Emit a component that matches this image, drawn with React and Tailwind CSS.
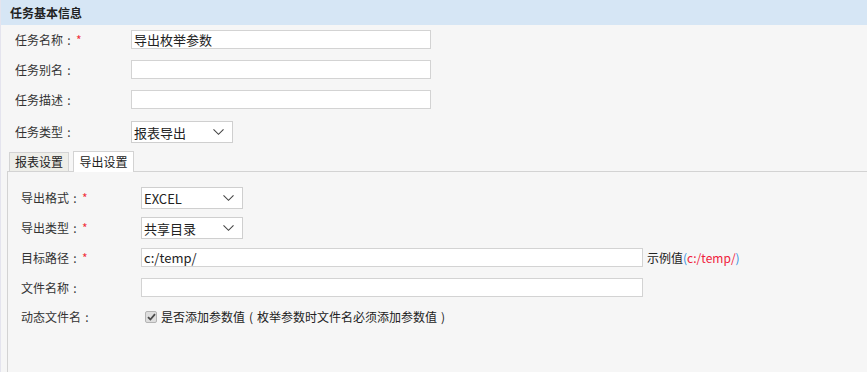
import React from 'react';

const font = { fontFamily: '"Noto Sans CJK SC", "Liberation Sans", sans-serif' };

function Chevron() {
    return (
        <svg width="11" height="7" viewBox="0 0 11 7" className="absolute right-[8px] top-1/2 -translate-y-1/2">
            <polyline points="0.5,0.8 5.5,5.8 10.5,0.8" fill="none" stroke="#444" strokeWidth="1.1" />
        </svg>
    );
}

function Select({ value }) {
    return (
        <div className="relative w-[102px] h-[22px] bg-white border border-[#cfcfcf] flex items-center pl-[2px] text-[13px] text-[#222] leading-none">
            {value}
            <Chevron />
        </div>
    );
}

function Input({ value = '', width }) {
    return (
        <div className={`${width} h-[19px] bg-white border border-[#d3d3d3] flex items-center pl-[2px] text-[13px] text-[#222] leading-none`}>
            {value}
        </div>
    );
}

// full-width glyph with the mark centred in its box, as YaHei draws it
function Mark({ children }) {
    return <span className="inline-block w-[12px] text-center">{children}</span>;
}

function Label({ children, required, width }) {
    return (
        <div className={`${width} shrink-0 text-[12px] text-[#333] leading-none flex items-center`}>
            {children}<Mark>:</Mark>{required && <span className="text-[#f0323c] ml-[1px]">*</span>}
        </div>
    );
}

export default function App() {
    return (
        <div style={font} className="w-[867px] h-[372px] bg-[#f6f6f6] overflow-hidden flex flex-col border-l border-[#e4e4ee]">
            <div className="h-[25px] shrink-0 bg-[#d6e6f5] pl-[9px] flex items-center text-[12px] font-bold text-[#222]">
                任务基本信息
            </div>

            <div className="pl-[14px] pt-[5px] flex flex-col">
                <div className="flex items-center h-[19px]">
                    <Label width="w-[116px]" required>任务名称</Label>
                    <Input width="w-[300px]" value="导出枚举参数" />
                </div>
                <div className="flex items-center h-[19px] mt-[11px]">
                    <Label width="w-[116px]">任务别名</Label>
                    <Input width="w-[300px]" />
                </div>
                <div className="flex items-center h-[19px] mt-[11px]">
                    <Label width="w-[116px]">任务描述</Label>
                    <Input width="w-[300px]" />
                </div>
                <div className="flex items-center h-[22px] mt-[12px]">
                    <Label width="w-[116px]">任务类型</Label>
                    <Select value="报表导出" />
                </div>
            </div>

            <div className="flex items-end h-[21px] mt-[7px] pl-[8px] gap-[4px] relative z-10">
                <div className="w-[60px] h-[19px] bg-[#eeeee9] border border-b-0 border-[#d3d3d3] flex items-center justify-center text-[12px] text-[#222] leading-none">
                    报表设置
                </div>
                <div className="w-[61px] h-[21px] -mb-px bg-white border border-b-0 border-[#d3d3d3] flex items-center justify-center text-[12px] text-[#222] leading-none">
                    导出设置
                </div>
            </div>

            <div className="flex-1 ml-[6px] border-l border-t border-[#d3d3d3] pl-[13px] pt-[15px] flex flex-col">
                <div className="flex items-center h-[22px]">
                    <Label width="w-[120px]" required>导出格式</Label>
                    <Select value="EXCEL" />
                </div>
                <div className="flex items-center h-[22px] mt-[8px]">
                    <Label width="w-[120px]" required>导出类型</Label>
                    <Select value="共享目录" />
                </div>
                <div className="flex items-center h-[19px] mt-[9px]">
                    <Label width="w-[120px]" required>目标路径</Label>
                    <Input width="w-[502px]" value="c:/temp/" />
                    <span className="ml-[4px] text-[12px] text-[#222] leading-none">
                        示例值<span className="text-[#2f8fe0]">(</span><span className="text-[#f0203c]">c:/temp/</span><span className="text-[#2f8fe0]">)</span>
                    </span>
                </div>
                <div className="flex items-center h-[19px] mt-[11px]">
                    <Label width="w-[120px]">文件名称</Label>
                    <Input width="w-[502px]" />
                </div>
                <div className="flex items-center h-[20px] mt-[10px]">
                    <Label width="w-[120px]">动态文件名</Label>
                    <div className="ml-[4px] w-[12px] h-[12px] rounded-[2px] bg-[#dedede] border border-[#b4b4b4] flex items-center justify-center">
                        <svg width="9" height="8" viewBox="0 0 9 8">
                            <polyline points="1,4.2 3.4,6.5 8,1.2" fill="none" stroke="#4a4a4a" strokeWidth="1.8" />
                        </svg>
                    </div>
                    <span className="ml-[4px] text-[12px] text-[#222] leading-none">
                        是否添加参数值<Mark>(</Mark>枚举参数时文件名必须添加参数值<Mark>)</Mark>
                    </span>
                </div>
            </div>
        </div>
    );
}
